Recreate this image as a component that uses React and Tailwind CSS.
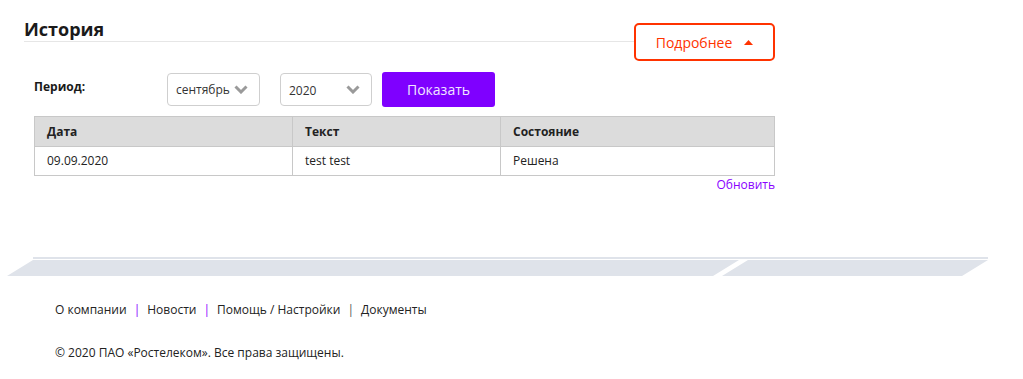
import React from "react";

const Chevron = () => (
  <svg width="14" height="9" viewBox="0 0 14 9" className="shrink-0">
    <polyline points="1.5,1.5 7,7 12.5,1.5" fill="none" stroke="#9a9a9a" strokeWidth="3" />
  </svg>
);

const Select = ({ value, width }) => (
  <div
    className={`${width} h-[33px] flex items-center justify-between pl-[8px] pr-[11px] border border-[#cfcfcf] rounded-[4px] bg-white text-[12px] text-[#333]`}
  >
    <span className={value === "2020" ? "pt-[2px]" : ""}>{value}</span>
    <Chevron />
  </div>
);

const FooterBand = () => (
  <svg width="1023" height="20" viewBox="0 0 1023 20" className="block">
    <rect x="33" y="0" width="955" height="2" fill="#dfe3ea" />
    <polygon points="33,3 739,3 713,19 7,19" fill="#dfe3ea" />
    <polygon points="748,3 988,3 962,19 722,19" fill="#dfe3ea" />
  </svg>
);

const rows = [{ date: "09.09.2020", text: "test test", state: "Решена" }];

export default function App() {
  return (
    <div className="w-[1023px] h-[379px] bg-white font-['Open_Sans',sans-serif] text-[#222] overflow-hidden">
      <div className="w-[751px] ml-[24px]">
        <div className="flex items-start">
          <div className="flex-1 h-[42px] pt-[17px] border-b border-[#e6e6e6]">
            <h1 className="text-[18px] leading-[24px] font-bold text-[#1a1a1a]">История</h1>
          </div>
          <button className="mt-[23px] w-[141px] h-[38px] flex items-center justify-center gap-[12px] border-2 border-[#ff3300] rounded-[5px] text-[14px] text-[#ff3300]">
            <span>Подробнее</span>
            <svg width="9" height="5" viewBox="0 0 9 5">
              <polygon points="0,5 4.5,0 9,5" fill="#ff3300" />
            </svg>
          </button>
        </div>

        <div className="pl-[10px]">
          <div className="mt-[11px] flex items-center h-[35px]">
            <div className="w-[133px] text-[12px] font-bold text-[#1a1a1a] -mt-[6px]">Период:</div>
            <Select value="сентябрь" width="w-[93px]" />
            <div className="ml-[20px]">
              <Select value="2020" width="w-[92px]" />
            </div>
            <button className="ml-[10px] w-[113px] h-[35px] bg-[#7f00ff] rounded-[3px] text-[14px] text-[#f0e6ff]">
              Показать
            </button>
          </div>

          <table className="mt-[9px] w-[741px] border-collapse text-[12px] text-[#222]">
            <thead>
              <tr className="bg-[#dcdcdc] h-[30px]">
                <th className="w-[258px] border border-[#c8c8c8] text-left font-bold pl-[12px]">Дата</th>
                <th className="w-[208px] border border-[#c8c8c8] text-left font-bold pl-[12px]">Текст</th>
                <th className="border border-[#c8c8c8] text-left font-bold pl-[12px]">Состояние</th>
              </tr>
            </thead>
            <tbody>
              {rows.map((r) => (
                <tr key={r.date} className="h-[29px]">
                  <td className="border border-[#c8c8c8] pl-[12px]">{r.date}</td>
                  <td className="border border-[#c8c8c8] pl-[12px]">{r.text}</td>
                  <td className="border border-[#c8c8c8] pl-[12px]">{r.state}</td>
                </tr>
              ))}
            </tbody>
          </table>

          <div className="flex justify-end mt-[1px]">
            <a className="text-[12px] leading-[16px] text-[#8a00ff]">Обновить</a>
          </div>
        </div>
      </div>

      <div className="mt-[64px]">
        <FooterBand />
      </div>

      <div className="pl-[55px] mt-[24px] text-[12px] text-[#222]">
        <div className="flex items-center h-[18px]">
          <span>О компании</span>
          <span className="mx-[7px] text-[#8a00ff]">|</span>
          <span>Новости</span>
          <span className="mx-[7px] text-[#8a00ff]">|</span>
          <span>Помощь / Настройки</span>
          <span className="mx-[7px] text-[#555]">|</span>
          <span>Документы</span>
        </div>
        <div className="mt-[25px] h-[18px] flex items-center">© 2020 ПАО «Ростелеком». Все права защищены.</div>
      </div>
    </div>
  );
}
